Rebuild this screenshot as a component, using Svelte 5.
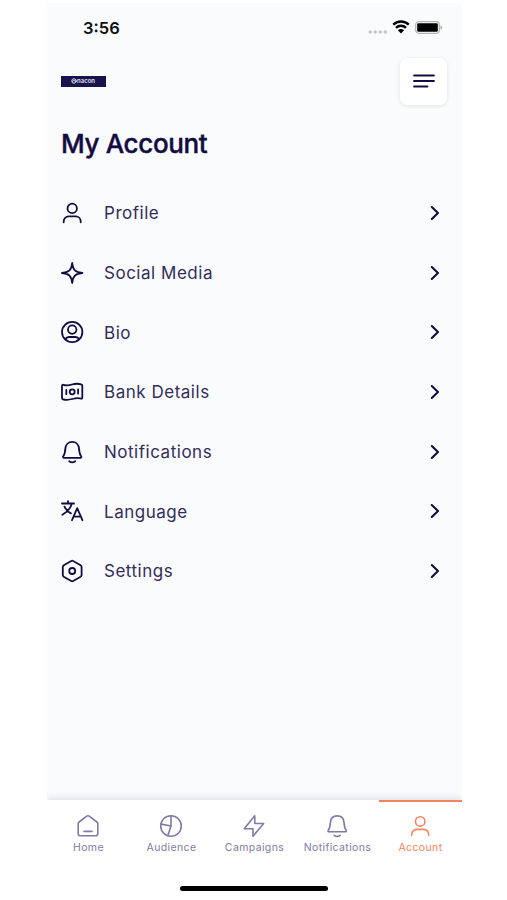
<script>
  const menu = [
    { icon: "user", label: "Profile" },
    { icon: "star", label: "Social Media" },
    { icon: "bio", label: "Bio" },
    { icon: "bank", label: "Bank Details" },
    { icon: "bell", label: "Notifications" },
    { icon: "language", label: "Language" },
    { icon: "settings", label: "Settings" },
  ];

  const tabs = [
    { icon: "home", label: "Home" },
    { icon: "chart", label: "Audience" },
    { icon: "bolt", label: "Campaigns" },
    { icon: "bell", label: "Notifications" },
    { icon: "user", label: "Account" },
  ];

  let active = $state("Account");
</script>

{#snippet icon(name)}
  <svg class="icon" viewBox="0 0 24 24">
    {#if name === "user"}
      <circle cx="12.200" cy="7.400" r="4.700" />
      <path d="M3.700 21.300v-.9a5 5 0 0 1 5-5h7a5 5 0 0 1 5 5v.9" />
    {:else if name === "star"}
      <path d="M12.200 2C12.800 8.800 15.400 11.400 22.400 12C15.400 12.600 12.800 15.200 12.200 22C11.600 15.200 9 12.600 2 12C9 11.400 11.600 8.800 12.200 2Z" />
    {:else if name === "bio"}
      <circle cx="12.200" cy="12" r="10.200" />
      <circle cx="12.200" cy="9.600" r="4.200" />
      <path d="M5.200 19.200c1-1.700 2.200-2.200 3.800-2.200h6.400c1.600 0 2.800.5 3.800 2.200" />
    {:else if name === "bank"}
      <path d="M3.300 4.800c3 1 5.700.6 8.700-.3s6-1 9.300-.2q1 .2 1 1.200v12.200q0 1.100-1.100.9c-3-.7-5.900-.4-8.900.4s-6 1.200-9.300.3q-1-.2-1-1.200V5.800q0-1.200 1.300-1Z" />
      <circle cx="12.200" cy="11.800" r="2.500" />
      <path d="M6.300 10v4.200M18.100 9.500v4.200" />
    {:else if name === "bell"}
      <path d="M12.200 1.900c-4 0-6.500 2.800-6.800 6.500-.2 3.300-.4 5.600-2.100 7.900-.6.900-.2 1.500.7 1.500h16.400c.9 0 1.300-.6.700-1.500-1.700-2.300-1.900-4.600-2.100-7.900C18.700 4.700 16.200 1.900 12.200 1.900Z" />
      <path d="M9.200 21.300c1.600 1.200 4.400 1.200 6 0" />
    {:else if name === "language"}
      <path d="M2 4.500h12M8 2.200v2.300M11.800 4.500C10.600 9 7 13.300 2.400 15.800M4.500 7.600c1.300 3 3.600 5.300 6.400 6.800M12 21.200l5.200-12 5.200 12M13.900 17.600h6.600" />
    {:else if name === "settings"}
      <path d="M12.200 1.700q.5 0 1 .3l7.400 4.200q1 .6 1 1.700v8.200q0 1.100-1 1.700L13.200 22q-1 .6-2 0l-7.400-4.200q-1-.6-1-1.700V7.900q0-1.100 1-1.700L11.200 2q.5-.3 1-.3Z" />
      <circle cx="12.200" cy="12" r="3" />
    {:else if name === "home"}
      <path d="M2.200 9.800q0-1.100.9-1.800L10.800 2.200q1.200-.9 2.400 0L20.900 8q.9.700.9 1.800v10q0 2-2 2H4.200q-2 0-2-2ZM8 17.400h8" />
    {:else if name === "chart"}
      <circle cx="12" cy="12" r="10.300" />
      <path d="M12 1.700v10.300L8.800 21.700M12 12L1.900 10.100" />
    {:else if name === "bolt"}
      <path d="M12.800 1.800v7.700h8.900L11 22.300V14.700H2.200Z" />
    {/if}
  </svg>
{/snippet}

<div class="phone">
  <div class="status">
    <time>3:56</time>
    <div class="signals">
      <svg class="dots" viewBox="0 0 20 4">
        <circle cx="2.200" cy="2" r="1.800" />
        <circle cx="7.200" cy="2" r="1.800" />
        <circle cx="12.300" cy="2" r="1.800" />
        <circle cx="17.300" cy="2" r="1.800" />
      </svg>
      <svg class="wifi" viewBox="0 0 18 14">
        <path d="M1.200 4.700a11.200 11.200 0 0 1 15.600 0M4 7.900a7 7 0 0 1 10 0" />
        <path class="fill" d="M5.900 10.300a4.400 4.400 0 0 1 6.200 0L9 13.500Z" />
      </svg>
      <svg class="battery" viewBox="0 0 28 13">
        <rect class="frame" x=".7" y=".7" width="23.600" height="11.600" rx="3.200" />
        <rect x="2.200" y="2.200" width="20.600" height="8.600" rx="1.300" />
        <path class="cap" d="M25.300 4.500q2 .5 2 2t-2 2Z" />
      </svg>
    </div>
  </div>

  <header>
    <div class="logo">
      <svg viewBox="0 0 6 6">
        <circle cx="3" cy="3" r="2.200" />
        <path d="M1.800 3.500L3 2.200l1.200 1.300" />
      </svg>
      <span>nacon</span>
    </div>
    <button class="toggle" aria-label="Menu">
      <svg viewBox="0 0 22 14">
        <path d="M1 1.500h20M1 7h20M1 12.500h13.500" />
      </svg>
    </button>
  </header>

  <main>
    <h1>My Account</h1>
    <ul>
      {#each menu as item}
        <li>
          {@render icon(item.icon)}
          <span>{item.label}</span>
          <svg class="chevron" viewBox="0 0 10 16">
            <path d="M1.800 2l6.200 6-6.200 6" />
          </svg>
        </li>
      {/each}
    </ul>
  </main>

  <nav>
    {#each tabs as tab}
      <button
        class="tab"
        class:active={active === tab.label}
        onclick={() => (active = tab.label)}
      >
        {@render icon(tab.icon)}
        <span>{tab.label}</span>
      </button>
    {/each}
  </nav>
  <div class="bottom"><div class="indicator"></div></div>
</div>

<style>
  :global(body) {
    background: #fff;
  }

  .phone {
    width: 415px;
    height: 897px;
    margin: 3px 0 0 47px;
    display: flex;
    flex-direction: column;
    overflow: hidden;
    background: #f9fbfd;
    color: #140c40;
    font-family: Inter, sans-serif;
  }

  button {
    padding: 0;
    border: 0;
    font: inherit;
    color: inherit;
  }

  svg {
    display: block;
    fill: none;
    stroke: currentColor;
    stroke-linecap: round;
    stroke-linejoin: round;
  }

  .status {
    height: 50px;
    display: flex;
    align-items: center;
    justify-content: space-between;
    padding: 0 19px 0 36px;
    color: #101010;
  }

  time {
    font-size: 16.5px;
    font-weight: 600;
    line-height: 20px;
  }

  .signals {
    display: flex;
    align-items: center;
  }

  .signals svg {
    stroke: none;
    fill: #000;
  }

  .signals .dots {
    width: 20px;
    height: 4px;
    margin: 8px 4px 0 0;
    fill: #c3c5c8;
  }

  .signals .wifi {
    width: 18px;
    height: 14px;
    margin: 0 5px 2px 0;
    fill: none;
    stroke: #000;
    stroke-width: 2.4;
    stroke-linecap: butt;
  }

  .signals .wifi .fill {
    fill: #000;
    stroke: none;
  }

  .signals .battery {
    width: 28px;
    height: 13px;
    margin-bottom: 1px;
  }

  .battery .frame {
    fill: none;
    stroke: #b3b4b6;
    stroke-width: 1.3;
  }

  .battery .cap {
    fill: #b3b4b6;
  }

  header {
    display: flex;
    align-items: center;
    justify-content: space-between;
    height: 56px;
    padding: 0 15px 0 13.5px;
  }

  .logo {
    width: 45px;
    height: 11px;
    display: flex;
    align-items: center;
    justify-content: center;
    background: #18134b;
    color: #e4e3ee;
    font-size: 6px;
    font-weight: 600;
    line-height: 10px;
  }

  .logo svg {
    width: 6px;
    height: 6px;
  }

  .toggle {
    width: 47px;
    height: 47px;
    display: flex;
    align-items: center;
    justify-content: center;
    border-radius: 7px;
    background: #fff;
    box-shadow: 0 1px 4px rgba(20, 20, 50, 0.1);
  }

  .toggle svg {
    width: 22px;
    height: 14px;
    stroke-width: 1.8;
  }

  main {
    flex: 1;
    padding: 18px 14px 0 13px;
  }

  h1 {
    margin: 0 0 22px 1px;
    font-size: 26px;
    font-weight: 500;
    line-height: 34px;
    letter-spacing: -0.35px;
    -webkit-text-stroke: 0.4px #140c40;
  }

  ul {
    margin: 0;
    padding: 0;
    list-style: none;
  }

  li {
    height: 59.7px;
    display: flex;
    align-items: center;
    color: #140c40;
  }

  li span {
    flex: 1;
    margin-left: 20px;
    padding-top: 1px;
    color: #332d59;
    font-size: 17px;
    letter-spacing: 0.52px;
  }

  .icon {
    width: 24px;
    height: 24px;
    stroke-width: 1.8;
  }

  .chevron {
    width: 10px;
    height: 16px;
    margin-right: 8px;
    stroke-width: 2.1;
  }

  nav {
    height: 71px;
    display: flex;
    background: #fff;
    box-shadow: 0 -2px 7px rgba(30, 40, 50, 0.12);
  }

  .tab {
    flex: 1;
    min-width: 0;
    display: flex;
    flex-direction: column;
    align-items: center;
    padding-top: 12px;
    border-top: 2px solid transparent;
    background: #fff;
    color: #7f7ba3;
    font-size: 10.5px;
    letter-spacing: 0.38px;
  }

  .tab.active {
    border-color: #f4845f;
    color: #f4845f;
  }

  .tab .icon {
    margin-left: -1px;
    stroke-width: 1.6;
  }

  .tab span {
    margin-top: 2px;
    line-height: 16px;
  }

  .bottom {
    height: 29px;
    display: flex;
    justify-content: center;
    align-items: flex-end;
    background: #fff;
  }

  .indicator {
    width: 148px;
    height: 5px;
    margin: 0 1px 9px 0;
    border-radius: 3px;
    background: #000;
  }
</style>
